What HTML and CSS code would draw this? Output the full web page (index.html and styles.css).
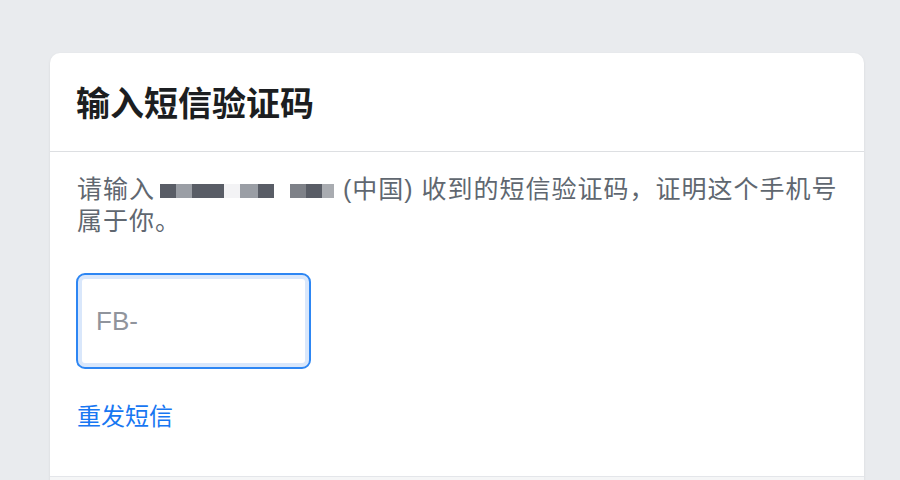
FILE: index.html
```html
<!DOCTYPE html>
<html lang="zh-CN">
<head>
<meta charset="utf-8">
<title>输入短信验证码</title>
<link rel="stylesheet" href="styles.css">
</head>
<body>
<div class="card">
  <div class="card-header">
    <h2 class="title">输入短信验证码</h2>
  </div>
  <div class="card-body">
    <p class="desc">请输入<span class="redact"><span class="b dark w16"></span><span class="b mid w16"></span><span class="b dark w32"></span><span class="b faint w16"></span><span class="b mid w18"></span><span class="b dark w16"></span><span class="b none w16"></span><span class="b mid2 w16"></span><span class="b dark w16"></span><span class="b light w12"></span></span>(中国) 收到的短信验证码，证明这个手机号属于你。</p>
    <div class="code-field">
      <input class="code-input" type="text" placeholder="FB-">
    </div>
    <a class="resend" href="#">重发短信</a>
  </div>
  <div class="card-footer"></div>
</div>
</body>
</html>
```
FILE: styles.css
```css
html, body {
  margin: 0;
  padding: 0;
}
body {
  background: #e9ebee;
  font-family: "Liberation Sans", "Noto Sans CJK SC", sans-serif;
  height: 480px;
  overflow: hidden;
}
.card {
  margin: 53px 0 0 50px;
  width: 814px;
  background: #fff;
  border-radius: 10px 10px 0 0;
  box-shadow: 0 1px 3px rgba(0, 0, 0, 0.08);
}
.card-header {
  padding: 29px 26px;
  border-bottom: 1px solid #dddfe2;
}
.title {
  margin: 0;
  font-size: 34px;
  line-height: 40px;
  font-weight: 700;
  color: #1c1e21;
  font-family: "Noto Sans CJK SC", sans-serif;
}
.card-body {
  padding: 21px 24px 45px 27px;
}
.desc {
  margin: 0;
  font-size: 25px;
  line-height: 32px;
  letter-spacing: 1px;
  color: #606770;
}
.redact {
  display: inline-flex;
  vertical-align: 0;
  height: 14px;
  padding: 0 9px 0 5px;
  letter-spacing: 0;
}
.b { display: block; height: 14px; }
.dark { background: #595d66; }
.mid { background: #9a9ea5; }
.mid2 { background: #7e8188; }
.faint { background: #f3f3f5; }
.light { background: #a9acb1; }
.none { background: transparent; }
.w12 { width: 12px; }
.w16 { width: 16px; }
.w18 { width: 18px; }
.w32 { width: 32px; }
.code-field {
  margin-top: 36px;
}
.code-input {
  box-sizing: border-box;
  display: block;
  width: 235px;
  height: 96px;
  margin-left: -1px;
  border: 2px solid #2d86f3;
  border-radius: 9px;
  box-shadow: inset 0 0 0 4px #d9e7fb;
  padding: 0 0 0 18px;
  font-family: "Liberation Sans", sans-serif;
  font-size: 26px;
  color: #1c1e21;
  outline: none;
  background: #fff;
}
.code-input::placeholder {
  color: #90949c;
}
.resend {
  display: block;
  margin-top: 30px;
  font-size: 24px;
  line-height: 32px;
  color: #1877f2;
  text-decoration: none;
  font-family: "Noto Sans CJK SC", sans-serif;
}
.card-footer {
  border-top: 1px solid #e4e6ea;
  background: #f5f6f7;
  height: 20px;
}
```
